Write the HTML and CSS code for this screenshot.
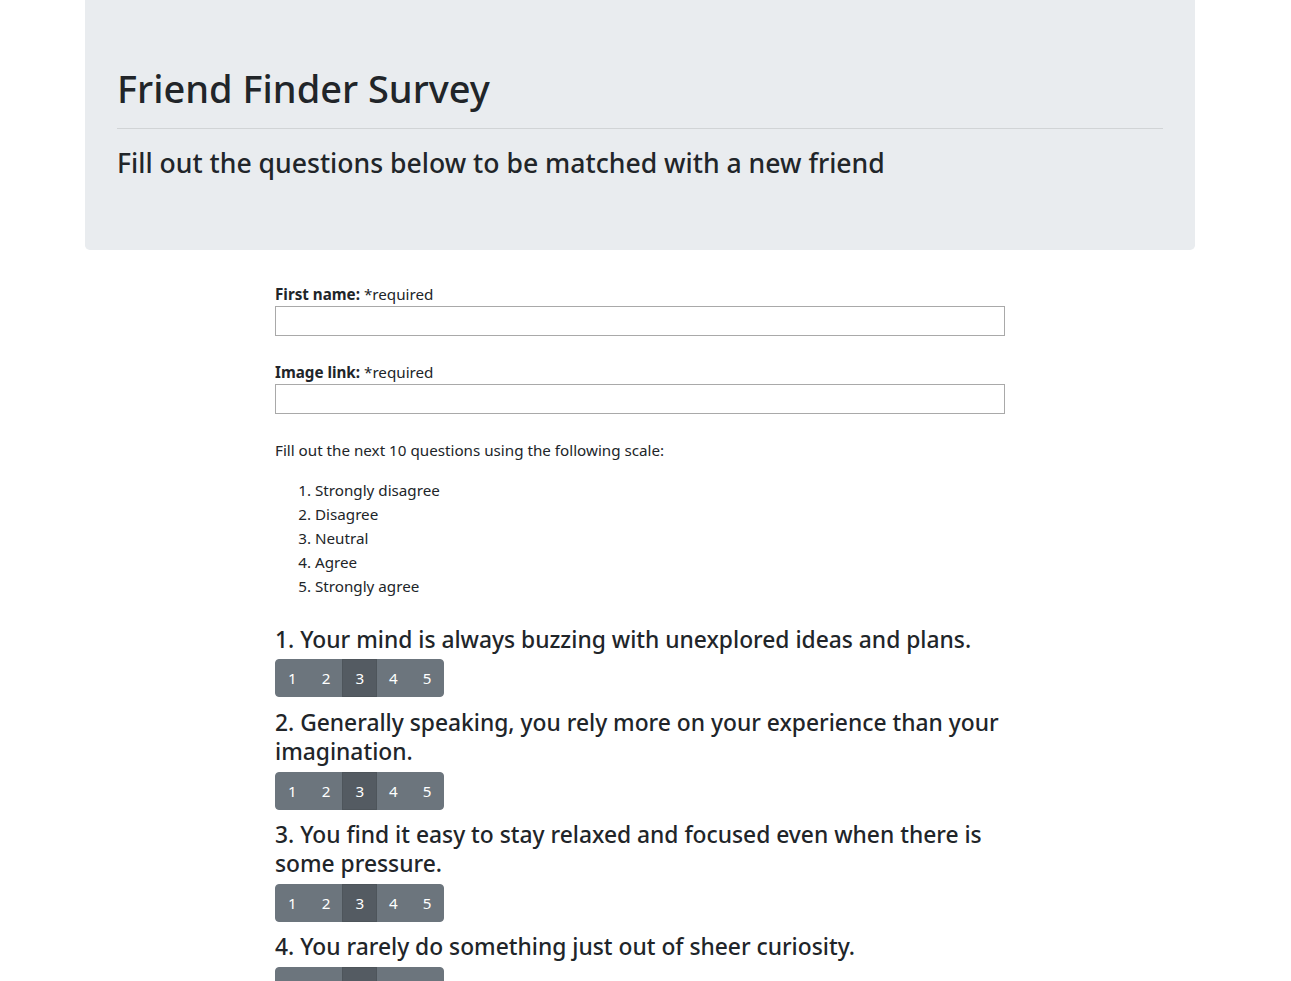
FILE: index.html
```html
<!DOCTYPE html>
<html lang="en">
<head>
<meta charset="utf-8">
<title>Friend Finder Survey</title>
<link rel="stylesheet" href="styles.css">
</head>
<body>
<div class="page">
  <header class="jumbotron">
    <h1 class="title">Friend Finder Survey</h1>
    <hr class="divider">
    <h3 class="subtitle">Fill out the questions below to be matched with a new friend</h3>
  </header>
  <main class="form-col">
    <div class="field">
      <label class="field-label"><b>First name:</b> *required</label>
      <input class="field-input" type="text">
    </div>
    <div class="field">
      <label class="field-label"><b>Image link:</b> *required</label>
      <input class="field-input" type="text">
    </div>
    <p class="scale-intro">Fill out the next 10 questions using the following scale:</p>
    <ol class="scale">
      <li>Strongly disagree</li>
      <li>Disagree</li>
      <li>Neutral</li>
      <li>Agree</li>
      <li>Strongly agree</li>
    </ol>
    <section class="question">
      <h4 class="q-text">1. Your mind is always buzzing with unexplored ideas and plans.</h4>
      <div class="btn-group"><span class="btn">1</span><span class="btn">2</span><span class="btn active">3</span><span class="btn">4</span><span class="btn">5</span></div>
    </section>
    <section class="question">
      <h4 class="q-text">2. Generally speaking, you rely more on your experience than your imagination.</h4>
      <div class="btn-group"><span class="btn">1</span><span class="btn">2</span><span class="btn active">3</span><span class="btn">4</span><span class="btn">5</span></div>
    </section>
    <section class="question">
      <h4 class="q-text">3. You find it easy to stay relaxed and focused even when there is some pressure.</h4>
      <div class="btn-group"><span class="btn">1</span><span class="btn">2</span><span class="btn active">3</span><span class="btn">4</span><span class="btn">5</span></div>
    </section>
    <section class="question">
      <h4 class="q-text">4. You rarely do something just out of sheer curiosity.</h4>
      <div class="btn-group"><span class="btn">1</span><span class="btn">2</span><span class="btn active">3</span><span class="btn">4</span><span class="btn">5</span></div>
    </section>
  </main>
</div>
</body>
</html>
```
FILE: styles.css
```css
* { box-sizing: border-box; }
body {
  margin: 0;
  font-family: "Noto Sans", "Open Sans", sans-serif;
  font-size: 15.2px;
  line-height: 24px;
  color: #212529;
  background: #fff;
}
.page {
  width: 1110px;
  margin-left: 85px;
}
.jumbotron {
  background: #e9ecef;
  border-radius: 0 0 4.8px 4.8px;
  padding: 64px 32px;
  margin-bottom: 32px;
}
.title {
  margin: 0 0 8px;
  padding-top: 1px;
  font-size: 38px;
  font-weight: 500;
  line-height: 47px;
}
.divider {
  margin: 16px 0;
  border: 0;
  border-top: 1px solid rgba(0,0,0,0.1);
}
.subtitle {
  margin: 0 0 6px;
  padding-top: 2px;
  font-size: 26.6px;
  font-weight: 500;
  line-height: 33px;
}
.form-col {
  width: 730px;
  margin-left: 190px;
  display: flex;
  flex-direction: column;
  align-items: flex-start;
}
.field {
  display: flex;
  flex-direction: column;
  align-self: stretch;
  margin-bottom: 24px;
}
.field-label b { font-weight: 700; }
.field-input {
  height: 30px;
  width: 730px;
  border: 1px solid #a9a9a9;
  margin: 0;
}
.scale-intro {
  margin: 0 0 16px;
}
.scale {
  margin: 0 0 16px;
  padding-left: 40px;
}
.question {
  margin-top: 11.6px;
  align-self: stretch;
}
.q-text {
  margin: 0 0 5px;
  font-size: 22.8px;
  font-weight: 500;
  line-height: 28.8px;
}
.btn-group {
  display: inline-flex;
  vertical-align: top;
}
.btn {
  display: inline-block;
  padding: 6px 12px;
  font-size: 15.2px;
  line-height: 24px;
  color: #fff;
  background: #6c757d;
  border: 1px solid #6c757d;
  text-align: center;
}
.btn + .btn { margin-left: -1px; }
.btn:first-child { border-radius: 4px 0 0 4px; }
.btn:last-child { border-radius: 0 4px 4px 0; }
.btn.active {
  background: #545b62;
  border-color: #4e555b;
  position: relative;
}
```
